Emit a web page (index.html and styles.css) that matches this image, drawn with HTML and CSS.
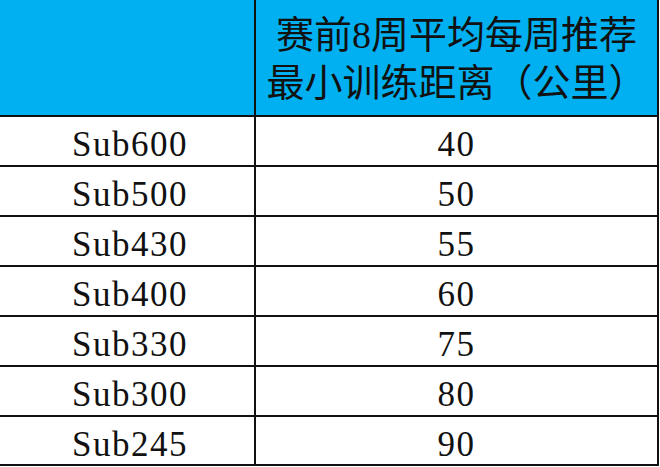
FILE: index.html
```html
<!DOCTYPE html>
<html lang="zh-CN">
<head>
<meta charset="utf-8">
<title>赛前8周平均每周推荐最小训练距离</title>
<link rel="stylesheet" href="styles.css">
</head>
<body>
<div class="sheet">
  <div class="cell head name"></div>
  <div class="cell head value"><span>赛前8周平均每周推荐</span><span>最小训练距离（公里）</span></div>

  <div class="cell name">Sub600</div><div class="cell value">40</div>
  <div class="cell name">Sub500</div><div class="cell value">50</div>
  <div class="cell name">Sub430</div><div class="cell value">55</div>
  <div class="cell name">Sub400</div><div class="cell value">60</div>
  <div class="cell name">Sub330</div><div class="cell value">75</div>
  <div class="cell name">Sub300</div><div class="cell value">80</div>
  <div class="cell name">Sub245</div><div class="cell value">90</div>
</div>
</body>
</html>
```

FILE: styles.css
```css
html, body {
  margin: 0;
  padding: 0;
  background: #ffffff;
}

.sheet {
  display: grid;
  width: 659px;
  grid-template-columns: 256px 403px;
  grid-template-rows: 117px repeat(6, 50px) 49px;
  color: #111111;
  font-family: "Liberation Serif", "Noto Sans CJK SC", serif;
}

.cell {
  box-sizing: border-box;
  border-right: 2px solid #111111;
  border-bottom: 2px solid #111111;
  display: flex;
  align-items: center;
  justify-content: center;
  padding-top: 8px;
  font-size: 35px;
  letter-spacing: 1.5px;
  line-height: 40px;
}

.cell.name {
  padding-left: 6px;
}

.cell.head {
  background: #00b0f0;
  flex-direction: column;
  justify-content: flex-start;
  padding: 11px 0 0 0;
  font-family: "Liberation Serif", "Noto Sans CJK SC", sans-serif;
  font-size: 38px;
  letter-spacing: 0;
  line-height: 48px;
}

.cell.head span {
  display: block;
  white-space: nowrap;
}
```
